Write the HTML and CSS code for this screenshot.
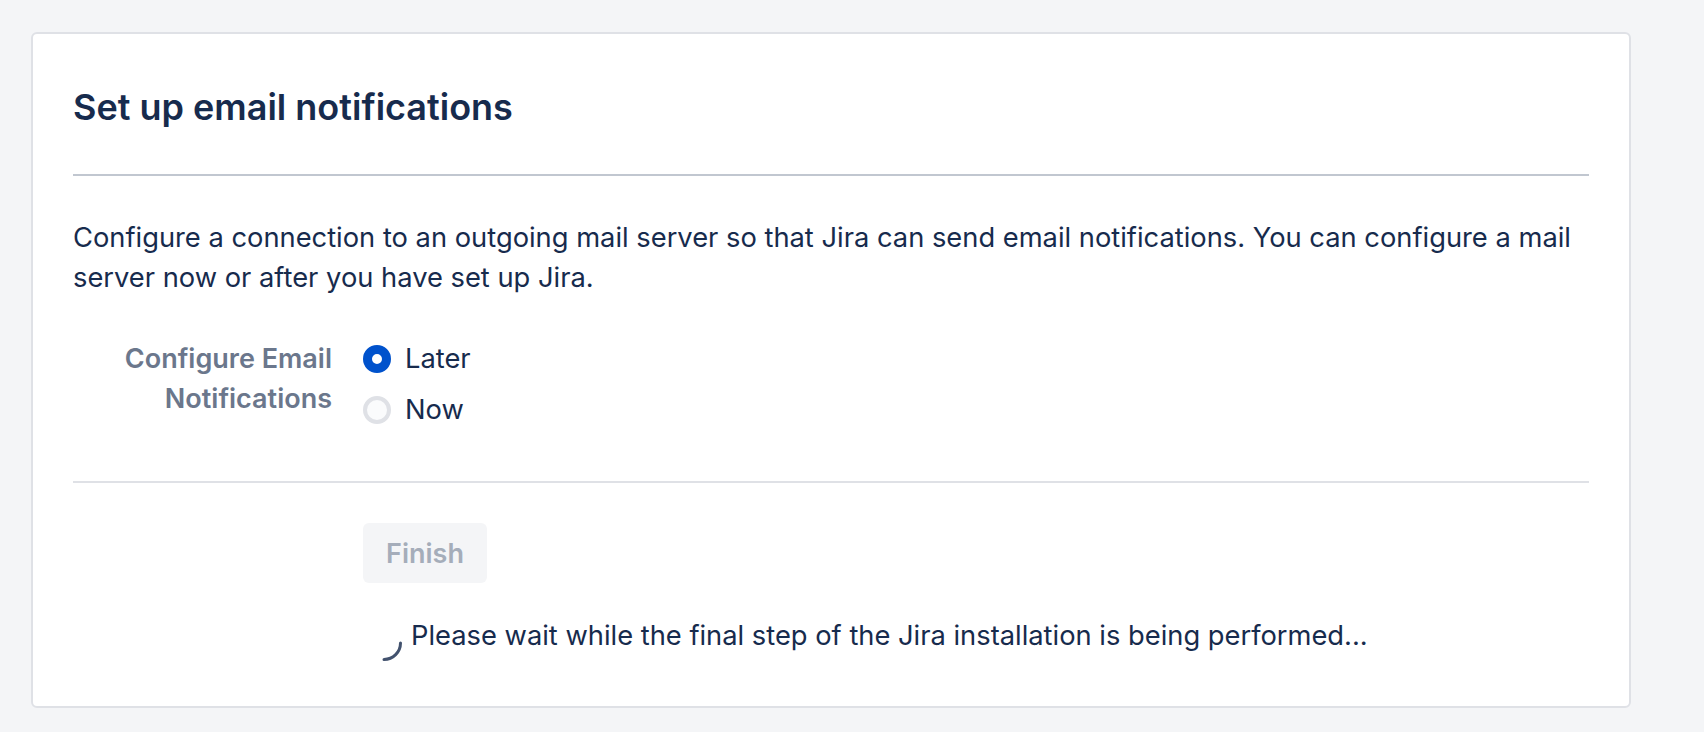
FILE: index.html
```html
<!DOCTYPE html>
<html lang="en">
<head>
<meta charset="utf-8">
<title>Set up email notifications</title>
<link rel="stylesheet" href="styles.css">
</head>
<body>
<div class="page">
  <section class="card">
    <h1 class="card-title">Set up email notifications</h1>
    <p class="intro">Configure a connection to an outgoing mail server so that Jira can send email notifications. You can configure a mail server now or after you have set up Jira.</p>
    <div class="field">
      <div class="field-label">Configure Email Notifications</div>
      <div class="radios">
        <label class="radio-row"><input class="radio" type="radio" name="mail" checked><span>Later</span></label>
        <label class="radio-row"><input class="radio" type="radio" name="mail"><span>Now</span></label>
      </div>
    </div>
    <div class="actions">
      <button class="btn" disabled>Finish</button>
      <div class="wait">
        <svg class="spinner" width="40" height="40" viewBox="0 0 40 40" aria-hidden="true">
          <path d="M37.5 20 A16.5 16.5 0 0 1 21 36.5" fill="none" stroke="#42526e" stroke-width="3" stroke-linecap="round"/>
        </svg>
        <span class="wait-text">Please wait while the final step of the Jira installation is being performed...</span>
      </div>
    </div>
  </section>
</div>
</body>
</html>
```
FILE: styles.css
```css
html, body {
  margin: 0;
  padding: 0;
  background: #f4f5f7;
}
body {
  font-family: Inter, "Noto Sans", "Liberation Sans", sans-serif;
  color: #172b4d;
}
.page {
  padding: 32px 0 0 31px;
}
.card {
  box-sizing: border-box;
  width: 1600px;
  height: 676px;
  background: #fff;
  border: 2px solid #dfe1e6;
  border-radius: 6px;
  padding: 53px 40px 44px;
}
.card-title {
  margin: 0;
  font-size: 36px;
  font-weight: 600;
  line-height: 40px;
  color: #172b4d;
  padding-bottom: 47px;
  border-bottom: 2px solid #c1c7d0;
}
.intro {
  margin: 42px 0 0;
  font-size: 27.3px;
  line-height: 40px;
}
.field {
  display: grid;
  grid-template-columns: 259px 1fr;
  column-gap: 31px;
  margin-top: 41px;
  padding-bottom: 51px;
  border-bottom: 2px solid #dfe1e6;
}
.field-label {
  text-align: right;
  font-size: 27px;
  font-weight: 600;
  line-height: 40px;
  color: #6b778c;
}
.radios {
  display: flex;
  flex-direction: column;
  gap: 11px;
}
.radio-row {
  display: flex;
  align-items: center;
  gap: 14px;
  height: 40px;
  font-size: 27.3px;
  line-height: 40px;
}
.radio {
  appearance: none;
  -webkit-appearance: none;
  box-sizing: border-box;
  margin: 0;
  width: 28px;
  height: 28px;
  border-radius: 50%;
  border: 4px solid #dfe1e6;
  background: #fafbfc;
  flex: none;
}
.radio:checked {
  border: 9px solid #0052cc;
  background: #fff;
}
.actions {
  padding-left: 290px;
}
.btn {
  display: flex;
  align-items: center;
  justify-content: center;
  margin-top: 40px;
  width: 124px;
  height: 60px;
  padding: 0;
  border: none;
  border-radius: 6px;
  background: #f4f5f7;
  color: #a5adba;
  font-family: Inter, "Noto Sans", "Liberation Sans", sans-serif;
  font-size: 27px;
  font-weight: 600;
}
.wait {
  display: flex;
  align-items: flex-start;
  gap: 8px;
  margin-top: 33px;
}
.spinner {
  flex: none;
  margin-top: 7px;
}
.wait-text {
  font-size: 27.3px;
  line-height: 40px;
}
```
